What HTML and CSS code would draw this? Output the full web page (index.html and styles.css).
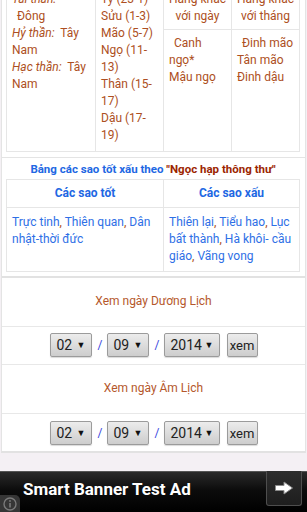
FILE: index.html
```html
<!DOCTYPE html>
<html lang="vi">
<head>
    <meta charset="UTF-8">
    <meta name="viewport" content="width=device-width, initial-scale=1.0">
    <title>Xem ngày</title>
    <link rel="stylesheet" href="styles.css">
</head>
<body>
    <div class="viewport">
        <div class="panel">
            <section class="sec sec-top">
                <table class="grid">
                    <colgroup>
                        <col class="c1"><col class="c2"><col class="c3"><col class="c4">
                    </colgroup>
                    <tr>
                        <td rowspan="2"><i>Tài thần:</i><br><span class="ind">Đông</span><br><i>Hỷ thần:</i>&nbsp; Tây<br>Nam<br><i>Hạc thần:</i>&nbsp; Tây<br>Nam</td>
                        <td rowspan="2">Tý (23-1)<br>Sửu (1-3)<br>Mão (5-7)<br>Ngọ (11-<br>13)<br>Thân (15-<br>17)<br>Dậu (17-<br>19)</td>
                        <td class="head">Hàng khắc<br>với ngày</td>
                        <td class="head">Hàng khắc<br>với tháng</td>
                    </tr>
                    <tr>
                        <td class="body"><span class="ind">Canh</span><br>ngọ*<br>Mậu ngọ</td>
                        <td class="body"><span class="ind">Đinh mão</span><br>Tân mão<br>Đinh dậu</td>
                    </tr>
                </table>
            </section>

            <section class="sec sec-stars">
                <div class="stars-title">Bảng các sao tốt xấu theo <span class="quote">"Ngọc hạp thông thư"</span></div>
                <table class="stars">
                    <colgroup>
                        <col class="s1"><col>
                    </colgroup>
                    <tr>
                        <th>Các sao tốt</th>
                        <th>Các sao xấu</th>
                    </tr>
                    <tr>
                        <td>Trực tinh<span class="sep">,</span> Thiên quan<span class="sep">,</span> Dân nhật-thời đức</td>
                        <td>Thiên lại<span class="sep">,</span> Tiểu hao<span class="sep">,</span> Lục bất thành<span class="sep">,</span> Hà khôi- cầu giáo<span class="sep">,</span> Vãng vong</td>
                    </tr>
                </table>
            </section>

            <div class="label">Xem ngày Dương Lịch</div>
            <div class="pick">
                <span class="sel sel-s">02<span class="caret">▼</span></span>
                <span class="slash">/</span>
                <span class="sel sel-s">09<span class="caret">▼</span></span>
                <span class="slash">/</span>
                <span class="sel sel-l">2014<span class="caret">▼</span></span>
                <span class="btn">xem</span>
            </div>

            <div class="label">Xem ngày Âm Lịch</div>
            <div class="pick last">
                <span class="sel sel-s">02<span class="caret">▼</span></span>
                <span class="slash">/</span>
                <span class="sel sel-s">09<span class="caret">▼</span></span>
                <span class="slash">/</span>
                <span class="sel sel-l">2014<span class="caret">▼</span></span>
                <span class="btn">xem</span>
            </div>
        </div>
    </div>

    <div class="ad">
        <span class="ad-text">Smart Banner Test Ad</span>
        <span class="ad-go">
            <svg width="20" height="14" viewBox="0 0 20 14">
                <path d="M1.5 4.5 H10 V1 L18.5 7 L10 13 V9.5 H1.5 Z" fill="#fff" stroke="#8a8a8a" stroke-width="1"/>
            </svg>
        </span>
        <span class="ad-info">
            <svg width="14" height="14" viewBox="0 0 14 14">
                <circle cx="7" cy="7" r="6" fill="none" stroke="#7a7a7a" stroke-width="1.4"/>
                <rect x="6.2" y="6" width="1.6" height="4.5" fill="#7a7a7a"/>
                <circle cx="7" cy="4" r="0.9" fill="#7a7a7a"/>
            </svg>
        </span>
    </div>
</body>
</html>
```

FILE: styles.css
```css
body {
    margin: 0;
    font-family: Roboto, "Noto Sans", sans-serif;
    font-size: 12px;
    line-height: 17px;
    background-color: #f4f0f4;
    color: #ad4f22;
    overflow: hidden;
}
.viewport {
    height: 471px;
    overflow: hidden;
}
.panel {
    margin: -20px 1px 0 1px;
    background: #fff;
    border: 1px solid #e4e4e4;
    border-bottom: 2px solid #e2e2e2;
}
.sec {
    padding: 5px 5px 5px 4px;
    border-bottom: 1px solid #e4e4e4;
}
.sec-stars {
    padding-top: 3px;
    padding-bottom: 4px;
    border-bottom: 2px solid #e2e2e2;
}
table {
    width: 100%;
    border-collapse: collapse;
    table-layout: fixed;
}
td, th {
    border: 1px solid #e6e6e6;
    vertical-align: top;
    padding: 4px 5px 7px;
}
.grid td {
    white-space: nowrap;
}
.c1 { width: 89px; }
.c2 { width: 68px; }
.c3 { width: 68px; }
.s1 { width: 157px; }
.grid .head {
    text-align: center;
    padding-bottom: 4px;
    height: 34px;
}
.grid .body {
    padding-top: 5px;
    height: 109px;
}
.ind {
    padding-left: 5px;
}
i {
    font-style: italic;
}
.stars-title {
    text-align: center;
    font-size: 11.5px;
    font-weight: bold;
    color: #2167e3;
    margin-bottom: 1px;
}
.stars-title .quote {
    color: #9c2500;
}
.stars th {
    color: #2167e3;
    font-size: 12px;
    padding: 5px;
}
.stars td {
    color: #2e6fe6;
    padding: 6px 5px;
}
.stars .sep {
    color: #ad4f22;
}
.label {
    text-align: center;
    color: #b5582c;
    padding: 15px 0 16px;
    border-bottom: 1px solid #e8e8e8;
}
.pick {
    display: flex;
    justify-content: center;
    align-items: center;
    gap: 6px;
    padding: 6px 0 7px;
    border-bottom: 1px solid #e8e8e8;
}
.pick.last {
    padding: 7px 0 6px;
    border-bottom: none;
}
.sel, .btn {
    box-sizing: border-box;
    height: 24px;
    display: flex;
    align-items: center;
    background: linear-gradient(#ececec, #cdcdcd);
    border: 1px solid #9b9b9b;
    border-radius: 2px;
    color: #222;
    font-size: 14px;
    box-shadow: 0 1px 1px rgba(0, 0, 0, 0.15);
}
.sel {
    justify-content: space-between;
    padding: 0 5px 0 6px;
}
.sel-s { width: 42px; }
.sel-l { width: 56px; }
.caret {
    font-size: 9px;
    color: #111;
}
.btn {
    width: 31px;
    justify-content: center;
    margin-left: 1px;
    font-size: 13px;
}
.slash {
    color: #3848e0;
    width: 3px;
}
.ad {
    position: relative;
    height: 41px;
    background: linear-gradient(#2a2a2a, #0c0c0c 45%, #000);
    border-top: 1px solid #555;
    box-sizing: border-box;
    display: flex;
    align-items: center;
}
.ad-text {
    color: #fff;
    font-weight: bold;
    font-size: 17px;
    margin-left: 23px;
    margin-top: -5px;
}
.ad-go {
    position: absolute;
    right: 5px;
    top: -1px;
    width: 36px;
    height: 35px;
    box-sizing: border-box;
    border: 1px solid #4e4e4e;
    border-top: none;
    border-radius: 0 0 3px 3px;
    background: linear-gradient(#2d2d2d, #1e1e1e);
    display: flex;
    align-items: center;
    justify-content: center;
}
.ad-info {
    position: absolute;
    left: 0;
    bottom: 0;
    width: 20px;
    height: 17px;
    background: #363636;
    border-radius: 0 5px 0 0;
    display: flex;
    align-items: center;
    justify-content: center;
}
```
